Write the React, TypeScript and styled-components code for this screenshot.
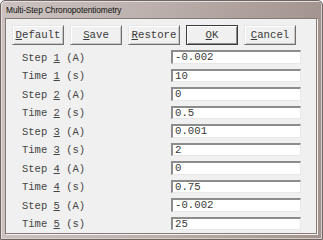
import React from 'react';
import styled, { createGlobalStyle } from 'styled-components';

const GlobalStyle = createGlobalStyle`
    html, body {
        margin: 0;
        padding: 0;
        background: #ffffff;
    }
`;

type Field = {
    kind: 'Step' | 'Time';
    n: number;
    unit: string;
    value: string;
};

const fields: Field[] = [
    { kind: 'Step', n: 1, unit: 'A', value: '-0.002' },
    { kind: 'Time', n: 1, unit: 's', value: '10' },
    { kind: 'Step', n: 2, unit: 'A', value: '0' },
    { kind: 'Time', n: 2, unit: 's', value: '0.5' },
    { kind: 'Step', n: 3, unit: 'A', value: '0.001' },
    { kind: 'Time', n: 3, unit: 's', value: '2' },
    { kind: 'Step', n: 4, unit: 'A', value: '0' },
    { kind: 'Time', n: 4, unit: 's', value: '0.75' },
    { kind: 'Step', n: 5, unit: 'A', value: '-0.002' },
    { kind: 'Time', n: 5, unit: 's', value: '25' },
];

const buttons = [
    { key: 'D', rest: 'efault' },
    { key: 'S', rest: 'ave' },
    { key: 'R', rest: 'estore' },
    { key: 'O', rest: 'K', isDefault: true },
    { key: 'C', rest: 'ancel' },
];

const App = () => {
    return (
        <>
            <GlobalStyle />
            <Window>
                <TitleBar>Multi-Step Chronopotentiometry</TitleBar>
                <Client>
                    <ButtonRow>
                        { buttons.map(b =>
                            <Button key={b.key} $isDefault={!!b.isDefault}>
                                <u>{b.key}</u>{b.rest}
                            </Button>
                        )}
                    </ButtonRow>
                    <Fields>
                        { fields.map(f =>
                            <React.Fragment key={`${f.kind}${f.n}`}>
                                <Label>{f.kind} <u>{f.n}</u> ({f.unit})</Label>
                                <Input>{f.value}</Input>
                            </React.Fragment>
                        )}
                    </Fields>
                </Client>
            </Window>
        </>
    )
}

const Window = styled.div`
    width: 323px;
    height: 240px;
    box-sizing: border-box;
    display: flex;
    flex-direction: column;
    padding: 0 5px 5px 4px;
    border: 1px solid #6f6562;
    border-radius: 5px 5px 0 0;
    background: linear-gradient(to right, #cbc2bf 0%, #bcb1ad 45%, #a3948f 100%);
    box-shadow: inset 1px 1px 0 #e4dedc, inset -1px -1px 0 #d8cfcc;
`;

const TitleBar = styled.div`
    height: 17px;
    display: flex;
    align-items: center;
    padding-left: 1px;
    font-family: "Liberation Sans", Arial, sans-serif;
    font-size: 8.4px;
    color: #111;
    letter-spacing: -0.1px;
`;

const Client = styled.div`
    flex: 1;
    background: #f0f0f0;
    border: 1px solid #877b78;
    box-shadow: 1px 1px 0 #f4f0ef;
    display: flex;
    flex-direction: column;
    padding: 6px 0 0 6px;
`;

const ButtonRow = styled.div`
    display: flex;
    gap: 6px;
`;

const Button = styled.div<{ $isDefault: boolean }>`
    width: 52px;
    height: 20px;
    box-sizing: border-box;
    display: flex;
    align-items: center;
    justify-content: center;
    font-family: "Liberation Mono", "Courier New", monospace;
    font-size: 10.7px;
    color: #3a3a3a;
    background: #f0f0f0;
    border: 1px solid;
    border-color: ${props => props.$isDefault
        ? '#3c3c3c'
        : '#e6e6e6 #6e6e6e #6e6e6e #e6e6e6'};
    box-shadow: ${props => props.$isDefault
        ? 'inset 1px 1px 0 #ffffff, inset -1px -1px 0 #8a8a8a'
        : 'inset 1px 1px 0 #ffffff, inset -1px -1px 0 #c8c8c8'};

    u {
        text-underline-offset: 1px;
    }
`;

const Fields = styled.div`
    display: grid;
    grid-template-columns: 149px 130px;
    grid-auto-rows: 18.5px;
    align-items: center;
    padding: 2.5px 0 0 10px;
`;

const Label = styled.div`
    font-family: "Liberation Mono", "Courier New", monospace;
    font-size: 10.5px;
    color: #444;
    padding-top: 2px;
    white-space: pre;

    u {
        text-underline-offset: 1px;
    }
`;

const Input = styled.div`
    height: 13.5px;
    box-sizing: border-box;
    display: flex;
    align-items: center;
    padding-left: 2px;
    font-family: "Liberation Mono", "Courier New", monospace;
    font-size: 10.7px;
    color: #3a3a3a;
    background: #ffffff;
    border-style: solid;
    border-width: 2px 1px 1px 2px;
    border-color: #8c8c8c #e8e8e8 #e8e8e8 #8c8c8c;
`;

export default App;
